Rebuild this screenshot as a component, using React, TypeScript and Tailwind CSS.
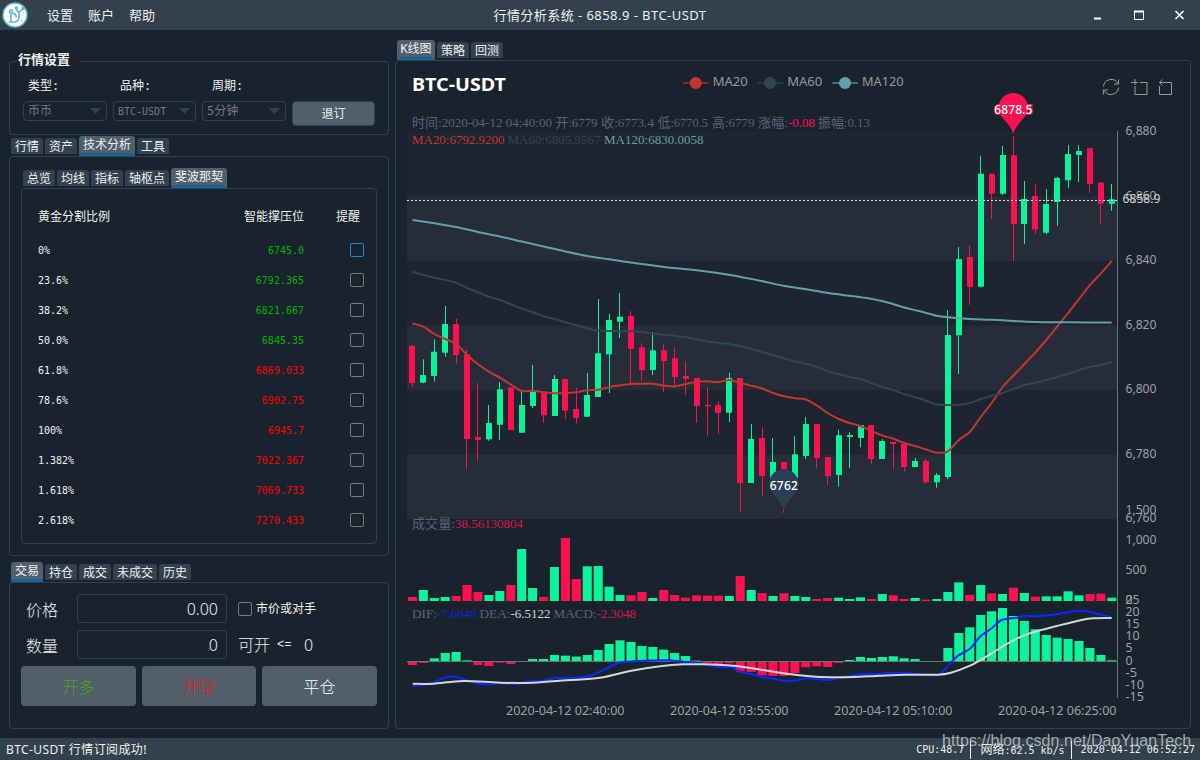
import React from "react";

type Candle = [up: number, top: number, bottom: number, high: number, low: number];

const CANDLES: Candle[] = [
  [0, 346, 383, 345, 386.7], [1, 375, 382.7, 359.3, 383.3], [1, 351.7, 376, 339.3, 381.7], [1, 324, 352.7, 306, 356.7],
  [0, 324, 355, 319, 363.7], [0, 354.3, 439, 350, 469], [0, 437, 440, 383, 461], [1, 423, 439.3, 405, 440.7],
  [1, 389.3, 424.7, 382, 440], [0, 387.7, 430, 387, 430], [1, 405, 432.7, 392, 432.7], [1, 392, 406, 365, 408],
  [0, 392, 415.3, 391, 423], [1, 379, 416, 375, 416], [0, 379, 410.7, 379, 419], [0, 409, 418, 387.7, 423.3],
  [1, 395, 416.7, 373, 416.7], [1, 353.3, 397, 299, 397], [1, 320, 354.3, 314, 393], [1, 316.7, 321.7, 293, 338],
  [0, 316, 349, 311.3, 383], [0, 347.3, 370, 343.3, 380.7], [1, 350.3, 370, 332, 375], [0, 350.3, 361, 344, 392],
  [0, 358.3, 377, 348, 386], [0, 376, 379, 361.3, 395], [0, 378, 406, 378, 423], [0, 405, 406.3, 387, 435.3],
  [0, 405, 413, 402, 433.7], [1, 378, 412.7, 372.7, 422], [0, 378, 483, 378, 512], [1, 439, 483, 424, 483],
  [0, 438, 476, 427.3, 496], [1, 462, 480, 438, 480], [0, 462, 470, 462, 512.7], [1, 454.3, 478, 436.3, 478],
  [1, 424, 456, 417, 459], [0, 424, 458, 424, 468.3], [0, 457, 476.3, 457, 485], [1, 435.3, 475, 429.7, 486.7],
  [1, 435, 437, 432.3, 468], [1, 425, 438, 425, 447.3], [0, 425, 459, 425, 464], [1, 441, 459, 439, 459],
  [0, 442, 444, 442, 469], [0, 443.7, 467, 443, 471.7], [1, 461, 467, 458, 467], [0, 461, 482.3, 459, 483.7],
  [1, 475, 482.3, 473, 487.7], [1, 335, 477, 310.3, 479], [1, 259, 335.3, 247, 374], [0, 257, 287, 245.3, 304.7],
  [1, 173.7, 286.7, 156, 287.3], [0, 173.7, 193.7, 173.7, 219], [1, 155, 193.7, 146, 195], [0, 155.3, 224, 136, 261],
  [1, 199, 224, 181, 244], [0, 196, 229.3, 184.3, 234], [1, 204, 232.7, 189.3, 234.3], [1, 178, 202, 177, 225.7],
  [1, 154, 180.3, 145, 188], [1, 151, 155, 145, 182], [0, 148.3, 184, 147.7, 192.7], [0, 182.7, 203.7, 182.3, 224.3],
  [1, 199.3, 203.7, 184, 210.7],
];

// bar heights, in thirds of a pixel
const VOLUME = [
  12, 33, 9, 12, 15, 48, 27, 18, 30, 48, 156, 39, 12, 102, 189, 66, 104, 105, 43, 18, 17, 27, 9, 33, 18, 10, 17, 16, 16, 15,
  75, 33, 24, 15, 23, 15, 12, 6, 9, 10, 6, 11, 6, 21, 17, 6, 9, 4, 6, 27, 56, 18, 48, 23, 21, 40, 24, 13, 14, 14, 29, 17, 21,
  22, 10,
];

const MACD = [
  -11, -5, 9, 25, 28, 3, -11, -14, -4, -8, 0, 7, 7, 19, 17, 14, 19, 34, 52, 63, 58, 46, 43, 35, 25, 16, 2, -6, -10, -6, -30,
  -32, -42, -44, -44, -35, -18, -15, -17, -5, 4, 13, 10, 13, 15, 9, 7, 0, -2, 40, 85, 102, 139, 150, 160, 136, 121, 96, 79,
  71, 67, 61, 40, 19, 3,
];

const MA20 = [
  323.3, 326.7, 334, 339, 344, 355, 364.3, 371.7, 377.7, 384.5, 391, 390.7, 392.3, 393.3, 393, 392.3, 390.3, 389.7, 387,
  385.3, 384, 383.7, 383.7, 385.5, 386.5, 384, 382, 381.3, 382, 380, 383, 385.7, 388.5, 393, 396.3, 398.2, 399.5, 405.5, 413,
  419, 423, 426, 431, 435.5, 438.7, 443, 446, 449.5, 452.7, 451.3, 440, 432, 417, 403, 387, 375.5, 364, 352.5, 340, 326.5,
  313, 299, 285, 273.3, 261,
];

const MA60 = [
  271.7, 275, 277.7, 280, 282.7, 288, 292.3, 296.7, 300, 304.3, 308.5, 312.3, 316.3, 319, 322.3, 325.3, 328.5, 330.7, 331,
  331.3, 331.3, 332, 333.7, 334.7, 335.7, 337.3, 339.3, 341.3, 343, 344, 346.3, 349, 352, 355, 358.5, 361.5, 363.7, 367, 371,
  374.3, 377, 379, 383, 387, 390, 394, 397.3, 400.7, 404.5, 405, 405, 403, 399, 396, 393, 389, 385, 382.7, 380, 377, 373.7,
  370, 367, 365, 362.3,
];

const MA120: [number, number][] = [
  [412.5, 220], [434.3, 223.3], [456.2, 227], [478, 232], [499.8, 236.5], [521.7, 241.5], [543.5, 246.5], [565.4, 251.5],
  [587.2, 256], [609, 259.3], [640, 263.7], [656.7, 266], [673.3, 268], [696.7, 270.3], [730, 275], [756.7, 280], [783.3, 285.7],
  [806.7, 289.3], [830, 293.3], [866.7, 298], [886.7, 302.3], [903.3, 307.3], [920, 311.3], [936.7, 315.7], [948.3, 317.3],
  [970, 319], [991.7, 319.8], [1013.3, 321], [1035, 322], [1068, 322.3], [1111.7, 322.5],
];

const DIF: [number, number][] = [
  [412.7, 685.7], [423.3, 684.7], [434.3, 682.3], [444.3, 677.7], [455, 676.7], [463.3, 679.3], [476.7, 683.3], [488.3, 684.7],
  [500, 683], [515, 684], [531.7, 681.3], [543.3, 681], [555, 678], [576.7, 677.7], [590, 675.7], [600, 671.7], [613.3, 665],
  [621.7, 662.3], [633.3, 661.3], [646.7, 660.7], [666.7, 660.3], [683.3, 661.7], [701.7, 663.7], [720, 667.3], [731.7, 666.7],
  [738.3, 671.3], [750, 673.7], [761.7, 677], [773.3, 678.7], [783.3, 680.7], [795, 680.5], [806.7, 678.3], [818.3, 679],
  [827.3, 680], [836.7, 678.3], [846.7, 676.7], [860, 674.3], [880, 673.7], [893.3, 672.7], [906.7, 673.3], [936.7, 675.3],
  [943.3, 671], [956.7, 656.7], [970, 648.7], [980, 636.7], [991.7, 628.3], [1001.7, 620], [1016.7, 617.7], [1025, 615.7],
  [1036.7, 616.3], [1056.7, 614.3], [1078.3, 610.7], [1090, 612], [1111.7, 617.3],
];

const DEA: [number, number][] = [
  [412.7, 683.7], [433.3, 683.7], [463.3, 681], [500, 682.7], [533.3, 682.7], [566.7, 680.3], [600, 677.7], [630, 671],
  [660, 666.3], [683.3, 664.3], [700, 664.3], [733.3, 665.7], [756.7, 669], [783.3, 673.3], [810, 676.3], [830, 677.3],
  [853.3, 677], [880, 675.7], [906.7, 674.7], [936.7, 674.7], [950, 673], [970, 665.7], [990, 654.3], [1006.7, 644],
  [1023.3, 635.7], [1036.7, 631.3], [1056.7, 626], [1078.3, 620.7], [1093.3, 618.3], [1111.7, 618],
];

const GREEN = "#0cf49b";
const RED = "#fd1050";
const cx = (i: number) => 412.46 + 10.928 * i;

function smooth(p: [number, number][]) {
  let d = `M${p[0][0]} ${p[0][1]}`;
  for (let i = 0; i < p.length - 1; i++) {
    const a = p[Math.max(i - 1, 0)];
    const b = p[i];
    const c = p[i + 1];
    const e = p[Math.min(i + 2, p.length - 1)];
    d += `C${b[0] + (c[0] - a[0]) / 6} ${b[1] + (c[1] - a[1]) / 6} ${c[0] - (e[0] - b[0]) / 6} ${c[1] - (e[1] - b[1]) / 6} ${c[0]} ${c[1]}`;
  }
  return d;
}

const series = (ys: number[]): [number, number][] => ys.map((y, i) => [cx(i), y]);

function T(p: { x: number; y: number; w?: number; fill?: string; children: string; className?: string }) {
  return (
    <text x={p.x} y={p.y} fill={p.fill} textLength={p.w} lengthAdjust="spacingAndGlyphs" className={p.className}>
      {p.children}
    </text>
  );
}

function Pin({ x, top, tip, r, fill }: { x: number; top: number; tip: number; r: number; fill: string }) {
  const cy = top + r;
  const dx = r * 0.84;
  const dy = r * 0.54;
  return (
    <path
      fill={fill}
      d={`M${x - dx} ${cy + dy}A${r} ${r} 0 1 1 ${x + dx} ${cy + dy}C${x + dx * 0.6} ${cy + dy + 7} ${x + 2} ${tip - 8} ${x} ${tip}C${x - 2} ${tip - 8} ${x - dx * 0.6} ${cy + dy + 7} ${x - dx} ${cy + dy}Z`}
    />
  );
}

const LEGEND = [
  { x: 683, name: "MA20", color: "#c23531", w: 35 },
  { x: 757.5, name: "MA60", color: "#2f4554", w: 35 },
  { x: 832.3, name: "MA120", color: "#61a0a8", w: 41.5 },
];

const AXIS: [string, number, number][] = [
  ["6,880", 135, 31], ["6,860", 200, 31], ["6,840", 264, 31], ["6,820", 329, 31], ["6,800", 393, 31], ["6,780", 458, 31],
  ["1,500", 514, 31], ["6,760", 522, 31], ["1,000", 544, 31], ["500", 574, 21], ["0", 604, 7], ["25", 604, 14],
  ["20", 616, 14], ["15", 628, 14], ["10", 640, 14], ["5", 652, 7], ["0", 665, 7], ["-5", 677, 11.5], ["-10", 689, 18.5],
  ["-15", 701, 18.5],
];

function Chart() {
  return (
    <svg viewBox="396 61 794 667" className="block h-full w-full">
      {[0, 1, 2, 3, 4, 5].map((i) => (
        <rect key={i} x={407} y={132 + 64.5 * i} width={710} height={64.5} fill={i % 2 ? "#262d38" : "#1e2530"} />
      ))}
      <T x={412} y={91} w={94} fill="#fff" className="font-['Noto_Sans'] text-[18px] font-bold">BTC-USDT</T>
      {LEGEND.map((l) => (
        <g key={l.name}>
          <path d={`M${l.x} 83H${l.x + 25.5}`} stroke={l.color} strokeWidth={2} opacity={0.6} />
          <circle cx={l.x + 12.7} cy={83} r={6} fill={l.color} />
          <T x={l.x + 29.7} y={86} w={l.w} fill="#999" className="font-['Noto_Sans'] text-[12px]">{l.name}</T>
        </g>
      ))}
      <g fill="none" stroke="#999" strokeWidth={1}>
        <path d="M1103.5 86.5a7.7 7.7 0 0 1 14.3-3.2M1118.6 87.5a7.7 7.7 0 0 1-14.3 3.2M1118.6 79.5v4.6h-4.6M1103.4 94.5v-4.6h4.6" />
        <path d="M1131 82.5H1138M1140 82.5H1147V94.5H1135V86M1135 79V85" />
        <path d="M1162 82.5H1171.5V94.5H1159.5V86M1162.5 79.5l-3 3l3 3M1159.5 82.5h3" />
      </g>

      {CANDLES.map(([up, top, bottom, high, low], i) => {
        const c = up ? GREEN : RED;
        return (
          <g key={i} fill={c}>
            <rect x={Math.round(cx(i) - 0.6)} y={high} width={1} height={low - high} />
            <rect x={Math.round(cx(i) - 3)} y={top} width={6} height={Math.max(bottom - top, 1)} />
          </g>
        );
      })}
      <g fill="none" strokeWidth={2}>
        <path d={smooth(series(MA20))} stroke="#c23531" />
        <path d={smooth(series(MA60))} stroke="#2f4554" />
        <path d={smooth(MA120)} stroke="#61a0a8" />
      </g>

      <path d="M407 200.5H1117" stroke="#e0e0e0" strokeDasharray="2 2" />
      <path d="M1117.5 131V698" stroke="#6e7074" />

      <Pin x={1013.3} top={93} tip={134} r={14.6} fill={RED} />
      <text x={1013.3} y={114} textAnchor="middle" fill="#fff" stroke={RED} strokeWidth={2} paintOrder="stroke" textLength={38} className="font-['Noto_Sans'] text-[12px] font-medium">6878.5</text>
      <Pin x={783.8} top={469} tip={511} r={14.6} fill="#2b3e58" />
      <text x={783.8} y={490} textAnchor="middle" fill="#fff" textLength={28} className="font-['Noto_Sans'] text-[12px] font-medium">6762</text>

      {VOLUME.map((v, i) => (
        <rect key={i} x={cx(i) - 4.6} y={601 - v / 3} width={9.1} height={v / 3} fill={CANDLES[i][0] ? GREEN : RED} />
      ))}
      {MACD.map((v, i) => (
        <rect key={i} x={cx(i) - 4.6} y={v > 0 ? 661.3 - v / 3 : 661.3} width={9.1} height={Math.abs(v) / 3} fill={v > 0 ? GREEN : RED} />
      ))}
      <path d="M407 661.5H1117" stroke="#6e7074" />
      <path d={smooth(DIF)} fill="none" stroke="#0a28ff" strokeWidth={2} />
      <path d={smooth(DEA)} fill="none" stroke="#d6d6d6" strokeWidth={2} />

      <g fill="#a0a0a0" className="font-['Noto_Sans'] text-[12px]">
        {AXIS.map(([label, y, w], i) => (
          <T key={i} x={1125.5} y={y} w={w}>{label}</T>
        ))}
        <T x={506} y={715} w={118.5}>2020-04-12 02:40:00</T>
        <T x={670} y={715} w={118.5}>2020-04-12 03:55:00</T>
        <T x={834} y={715} w={118.5}>2020-04-12 05:10:00</T>
        <T x={998} y={715} w={118.5}>2020-04-12 06:25:00</T>
      </g>
      <T x={1122.5} y={203} w={38} fill="#d2d2d2" className="font-['Noto_Sans'] text-[12px]">6858.9</T>

      <g fill="#59627f" className="font-['Liberation_Serif','Noto_Sans_CJK_SC',serif] text-[13px]">
        <T x={412} y={127} w={140}>时间:2020-04-12 04:40:00</T>
        <T x={555.5} y={127} w={42}>开:6779</T>
        <T x={601} y={127} w={53}>收:6773.4</T>
        <T x={658} y={127} w={50}>低:6770.5</T>
        <T x={712} y={127} w={42.5}>高:6779</T>
        <T x={758} y={127} w={30}>涨幅:</T>
        <T x={788} y={127} w={27} fill={RED}>-0.08</T>
        <T x={818} y={127} w={52}>振幅:0.13</T>
        <T x={412} y={144} w={92.5} fill="#c23531">MA20:6792.9200</T>
        <T x={507.5} y={144} w={93} fill="#2f4554">MA60:6805.9567</T>
        <T x={604} y={144} w={99.5} fill="#61a0a8">MA120:6830.0058</T>
        <T x={412} y={528} w={43}>成交量:</T>
        <T x={455} y={528} w={68} fill="#d91648">38.56130804</T>
        <T x={412} y={618} w={25}>DIF:</T>
        <T x={437} y={618} w={39.5} fill="#0a28d8">-7.6646</T>
        <T x={479.5} y={618} w={31}>DEA:</T>
        <T x={510.5} y={618} w={40} fill="#d6d6d6">-6.5122</T>
        <T x={553.5} y={618} w={43}>MACD:</T>
        <T x={596.5} y={618} w={39.5} fill="#d91648">-2.3048</T>
      </g>
    </svg>
  );
}

function Tabs({ items, active }: { items: [string, string][]; active: number }) {
  return (
    <div className="flex h-5 items-center gap-[2px]">
      {items.map(([label, width], i) => (
        <div
          key={label}
          className={`${width} flex shrink-0 items-center justify-center whitespace-nowrap rounded-t-[3px] text-[12px] leading-none ${
            i === active ? "h-5 border-b-[3px] border-[#1464a0] bg-[#505f69] pt-px" : "h-4 bg-[#32414b] pt-px"
          }`}
        >
          {label}
        </div>
      ))}
    </div>
  );
}

function Check({ focus = false }: { focus?: boolean }) {
  return <span className={`block size-[14px] shrink-0 rounded-[2px] border ${focus ? "border-[#148cd2]" : "border-[#787878]"}`} />;
}

function Select({ label, width }: { label: string; width: string }) {
  return (
    <div className={`${width} flex h-5 items-center justify-between rounded-[4px] border border-[#32414b] pl-1 pr-[5px] text-[#787878]`}>
      <span className="whitespace-nowrap">{label}</span>
      <svg width="11" height="6" viewBox="0 0 11 6"><path d="M0 0H11L5.5 6Z" fill="#32414b" /></svg>
    </div>
  );
}

const LEVELS: [string, string, string][] = [
  ["0%", "6745.0", "text-[#00b400]"], ["23.6%", "6792.365", "text-[#00b400]"], ["38.2%", "6821.667", "text-[#00b400]"],
  ["50.0%", "6845.35", "text-[#00b400]"], ["61.8%", "6869.033", "text-[#ff0000]"], ["78.6%", "6902.75", "text-[#ff0000]"],
  ["100%", "6945.7", "text-[#ff0000]"], ["1.382%", "7022.367", "text-[#ff0000]"], ["1.618%", "7069.733", "text-[#ff0000]"],
  ["2.618%", "7270.433", "text-[#ff0000]"],
];

const mono = "font-['DejaVu_Sans_Mono','Noto_Sans_CJK_SC',monospace] text-[10px]";

function TitleBar() {
  return (
    <header className="grid h-[30px] shrink-0 grid-cols-[1fr_auto_1fr] items-center bg-[#32414b] font-['Noto_Sans','Noto_Sans_CJK_SC',sans-serif]">
      <div className="flex items-center pl-[2px]">
        <svg width="26" height="26" viewBox="0 0 26 26" fill="none">
          <circle cx="13" cy="13" r="12" fill="#fff" stroke="#54b9cf" strokeWidth="1.6" />
          <g stroke="#54b9cf" strokeWidth="1.5" strokeLinecap="round">
            <path d="M9 12.5v7.5h2.500c4 0 5.500-2 5.500-5.500v-4l3.500-3.500M17 10.500c-1-.6-2-1.700-2.300-3M11 11.500c2.300 0 3 1.500 3 3.500M7.500 20h2" />
            <circle cx="9" cy="9.500" r="1.500" />
            <circle cx="21" cy="6.500" r="0.900" />
            <circle cx="14.300" cy="6" r="0.900" />
          </g>
          <circle cx="20" cy="18.800" r="1.300" fill="#b9e2ea" />
        </svg>
        <nav className="flex gap-[15px] pl-[19px] pt-px text-[13px]">
          <span>设置</span><span>账户</span><span>帮助</span>
        </nav>
      </div>
      <div className="pt-px text-[13px] tracking-[0.45px]">行情分析系统 - 6858.9 - BTC-USDT</div>
      <div className="flex items-center justify-end pr-[15px]">
        <svg width="92" height="12" viewBox="0 0 92 12" fill="none" stroke="#fff">
          <path d="M1 9.5h7" strokeWidth="2" />
          <path d="M41.5 2.5h9v8h-9z" /><path d="M41 2.500h10" strokeWidth="2" />
          <path d="M82.5 2l8 8M90.500 2l-8 8" strokeWidth="1.600" />
        </svg>
      </div>
    </header>
  );
}

export default function App() {
  return (
    <div className="relative flex h-[760px] w-[1200px] flex-col overflow-hidden bg-[#19232d] font-['DejaVu_Sans_Mono','Noto_Sans_CJK_SC',monospace] text-[12px] text-[#f0f0f0]">
      <TitleBar />
      <main className="flex min-h-0 flex-1 gap-[6px] pl-[9px] pr-[9px]">
        <div className="flex w-[380px] shrink-0 flex-col">
          <fieldset className="mt-5 h-[85px] rounded-[4px] border border-[#32414b] pl-[13px]">
            <legend className="-ml-[7px] h-[22px] pl-[2px] pr-[9px] text-[13px] font-bold leading-[20px]">行情设置</legend>
            <div className="grid h-[19px] grid-cols-[92px_92px_80px] pl-[5px] pt-[5px] leading-[18px]">
              <span>类型:</span><span>品种:</span><span>周期:</span>
            </div>
            <div className="mt-[10px] flex gap-[6px] text-[12px]">
              <Select label="币币" width="w-[84px]" />
              <div className="contents text-[10px]"><Select label="BTC-USDT" width="w-[83px]" /></div>
              <Select label="5分钟" width="w-[84px]" />
              <button className="h-[25px] w-[83px] rounded-[4px] border border-[#32414b] bg-[#505f69]">退订</button>
            </div>
          </fieldset>

          <div className="mt-[1px] pl-[2px]">
            <Tabs items={[["行情", "w-8"], ["资产", "w-8"], ["技术分析", "w-14"], ["工具", "w-8"]]} active={2} />
          </div>
          <section className="h-[400px] shrink-0 rounded-[4px] border border-[#32414b] pl-[11px] pr-[11px] pt-[11px]">
            <div className="pl-[2px]">
              <Tabs items={[["总览", "w-8"], ["均线", "w-8"], ["指标", "w-8"], ["轴枢点", "w-11"], ["斐波那契", "w-14"]]} active={4} />
            </div>
            <div className="h-[356px] rounded-[4px] border border-[#32414b] pl-[15px] pr-3 pt-[13px]">
              <div className="grid h-[30px] grid-cols-[1fr_auto_60px] items-center">
                <span className="pl-px">黄金分割比例</span><span>智能撑压位</span><span className="pl-8">提醒</span>
              </div>
              {LEVELS.map(([ratio, price, color], i) => (
                <div key={ratio} className={`${mono} grid h-[30px] grid-cols-[1fr_auto_60px] items-center pt-[5px]`}>
                  <span className="pl-px pt-[2px]">{ratio}</span>
                  <span className={`${color} pt-[2px]`}>{price}</span>
                  <span className="flex justify-end"><Check focus={i === 0} /></span>
                </div>
              ))}
            </div>
          </section>

          <div className="mt-[6px] pl-[2px]">
            <Tabs items={[["交易", "w-8"], ["持仓", "w-8"], ["成交", "w-8"], ["未成交", "w-11"], ["历史", "w-8"]]} active={0} />
          </div>
          <section className="h-[147px] rounded-[4px] border border-[#32414b] pl-[11px] pr-[11px] pt-[11px] font-['Noto_Sans','Noto_Sans_CJK_SC',sans-serif] text-[16px] font-light">
            <div className="grid grid-cols-[56px_150px_1fr] gap-y-[7px] [&>*]:h-[29px]">
              <span className="pl-[5px] leading-[32px]">价格</span>
              <span className="rounded-[4px] border border-[#32414b] pr-2 text-right leading-[28px]">0.00</span>
              <span className="flex items-center gap-[4px] pl-[11px] text-[12px] font-normal"><Check />市价或对手</span>
              <span className="pl-[5px] leading-[32px]">数量</span>
              <span className="rounded-[4px] border border-[#32414b] pr-2 text-right leading-[28px]">0</span>
              <span className="flex items-center pl-[11px] leading-[32px]">
                可开<span className="w-[34px] pl-[7px] font-['Liberation_Mono'] text-[12px]">&lt;=</span>0
              </span>
            </div>
            <div className="mt-[7px] grid grid-cols-[115px_114px_115px] gap-[6px]">
              <button className="h-10 rounded-[4px] bg-[#505f69] pt-[2px] text-[#4ea614]">开多</button>
              <button className="h-10 rounded-[4px] bg-[#505f69] pt-[2px] text-[#ff1010]">开空</button>
              <button className="h-10 rounded-[4px] bg-[#505f69] pt-[2px] text-white">平仓</button>
            </div>
          </section>
        </div>

        <div className="flex min-w-0 flex-1 flex-col pt-[10px]">
          <div className="pl-[2px]">
            <Tabs items={[["K线图", "w-[38px]"], ["策略", "w-8"], ["回测", "w-8"]]} active={0} />
          </div>
          <section className="h-[669px] w-[796px] rounded-[4px] border border-[#32414b]"><Chart /></section>
        </div>
      </main>

      <footer className="flex h-[22px] shrink-0 items-center justify-between bg-[#32414b] pl-[6px] pr-[5px]">
        <span className="pt-px font-['Noto_Sans','Noto_Sans_CJK_SC',sans-serif] text-[12px] tracking-[0.4px]">BTC-USDT 行情订阅成功!</span>
        <div className={`${mono} flex items-center whitespace-nowrap pt-px`}>
          <span>CPU:48.7</span>
          <i className="ml-[6px] mr-[9px] h-[18px] w-px bg-[#f0f0f0]" />
          <span><span className="text-[12px]">网络</span>:62.5 kb/s</span>
          <i className="ml-[6px] mr-[9px] h-[18px] w-px bg-[#f0f0f0]" />
          <span>2020-04-12 06:52:27</span>
        </div>
      </footer>
      <div className="absolute left-[942px] top-[730px] whitespace-nowrap font-['Liberation_Sans'] text-[16px] leading-[22px] tracking-[0.06px] text-[#d0d4d8]/75">https://blog.csdn.net/DaoYuanTech</div>
    </div>
  );
}
